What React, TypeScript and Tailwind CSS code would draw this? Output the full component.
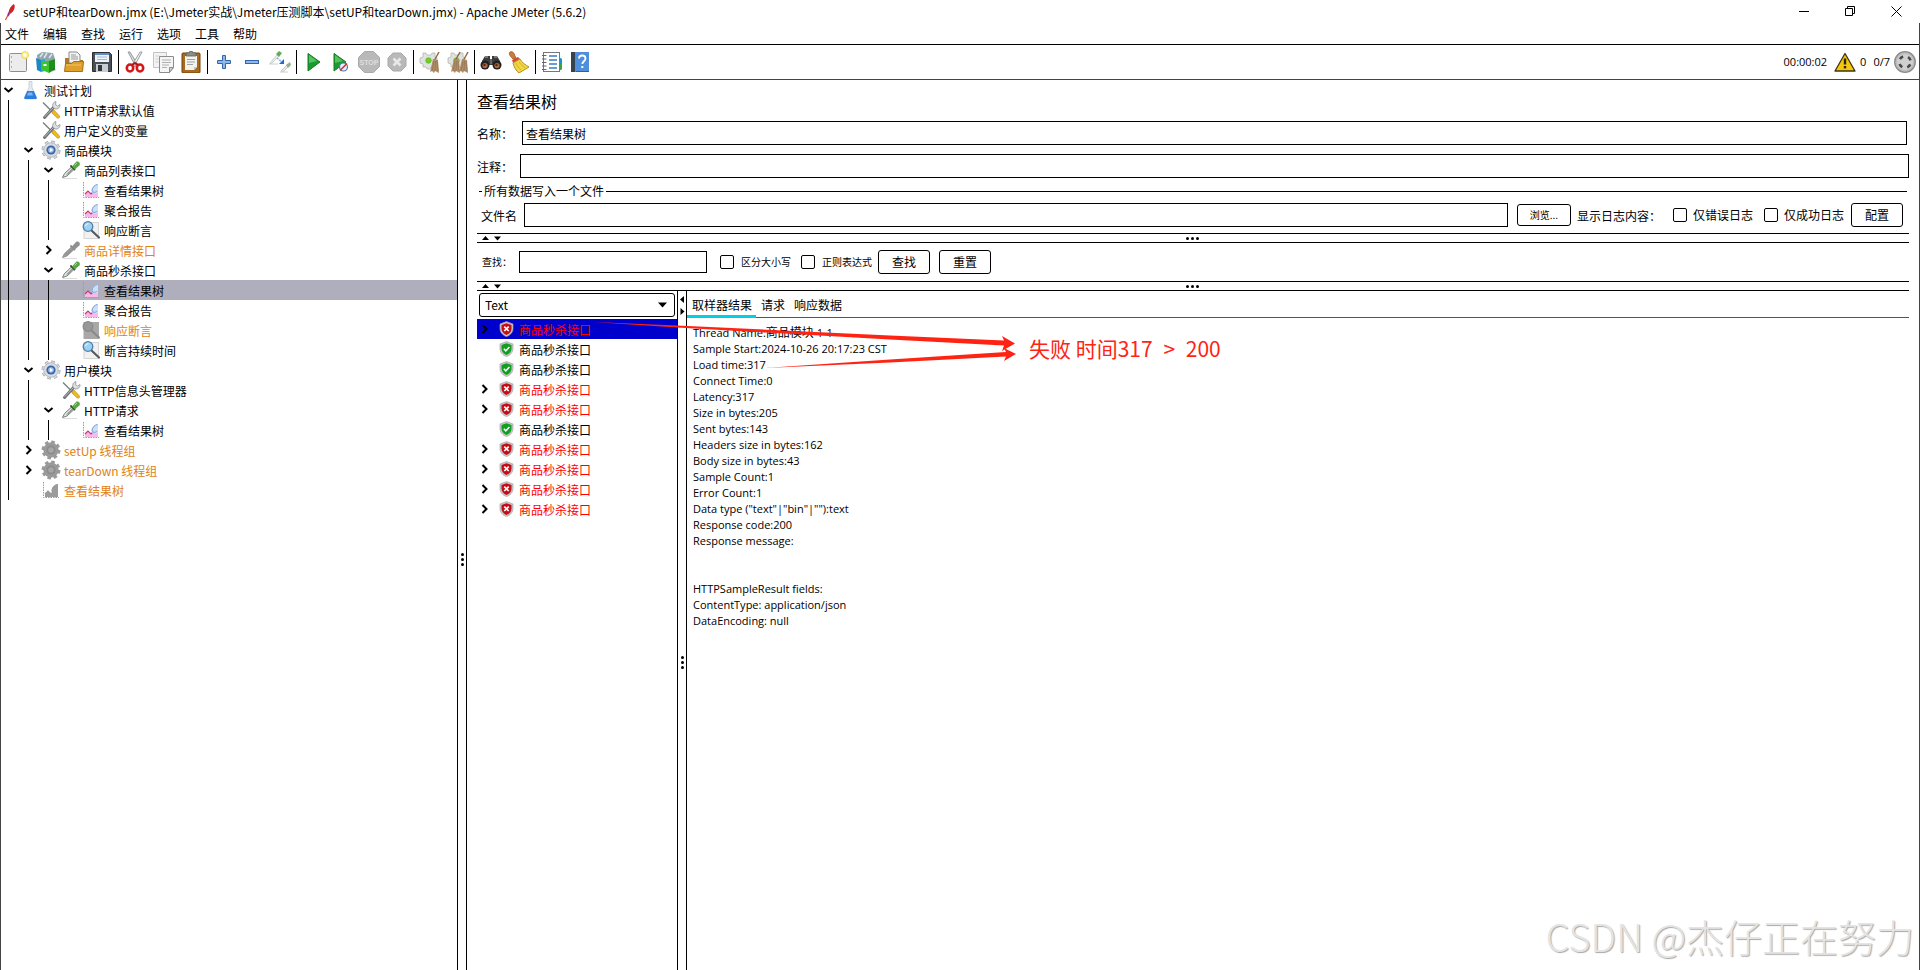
import { Fragment, ReactNode } from "react";

/* ---------- toolbar icons (22x22) ---------- */

const Icon = ({ children }: { children: ReactNode }) => (
    <svg width="22" height="22" viewBox="0 0 22 22" fill="none" aria-hidden="true">
        {children}
    </svg>
);

const NewIcon = () => (
    <Icon>
        <rect x="2.5" y="2.5" width="17" height="18" rx="1" fill="#ececec" stroke="#8e8e8e" />
        <path d="M4.5 5v2M4.5 10v2M4.5 15v2" stroke="#b0b0b0" />
        <circle cx="18" cy="4" r="3.5" fill="#fdf3a0" stroke="#f0d64a" />
        <circle cx="18" cy="4" r="1.5" fill="#fff" />
    </Icon>
);

const TemplatesIcon = () => (
    <Icon>
        <path d="M2 4l5-3 11 1 2 6v11H3z" fill="#8fa6ad" />
        <path d="M5 6l3-4M9 7l3-5M14 7l3-4" stroke="#dfe8ea" strokeWidth="1.5" />
        <path d="M1 7l5 2v12l-4-2z" fill="#1b87c4" />
        <path d="M6 9l4-1v12l-4 1z" fill="#2ba3df" />
        <path d="M7 10l7 0v12l-7-3z" fill="#3cc42d" />
        <path d="M14 10l6-2v10l-6 4z" fill="#1d8f1c" />
        <path d="M8.5 14h3" stroke="#fff" strokeWidth="2" />
        <path d="M19 17l2 2-5 2z" fill="#333" opacity=".4" />
    </Icon>
);

const OpenIcon = () => (
    <Icon>
        <path d="M2 7h5l1 2h12v11H2z" fill="#b5791a" />
        <path d="M6 1h8l3 3v8H6z" fill="#f4f4f4" stroke="#8a8a8a" />
        <path d="M8 4h5M8 6h7M8 8h7" stroke="#999" />
        <path d="M1.5 20.5l1-8h6l2-2h10l-1 10z" fill="#e0a02c" stroke="#a8721a" />
        <path d="M3 14h15" stroke="#f2c468" />
    </Icon>
);

const SaveIcon = () => (
    <Icon>
        <path d="M1.5 1.5h17l2 2v17h-19z" fill="#4a4f57" stroke="#2b2e33" />
        <rect x="4" y="2" width="14" height="9" fill="#eef3f9" />
        <path d="M4 2h14v2H4z" fill="#5b8ec9" />
        <path d="M6 6h10M6 8.5h10" stroke="#a9b8c8" />
        <rect x="5" y="13" width="12" height="8" fill="#c9ccd0" />
        <rect x="7" y="14" width="4" height="6" fill="#33363b" />
    </Icon>
);

const CutIcon = () => (
    <Icon>
        <path d="M4 1l2 0 8 13-2 2z" fill="#d5d8da" stroke="#85898c" strokeWidth=".8" />
        <path d="M18 1l-2 0-8 13 2 2z" fill="#eceeef" stroke="#85898c" strokeWidth=".8" />
        <ellipse cx="6" cy="17" rx="3.2" ry="3.5" stroke="#d11717" strokeWidth="2.6" />
        <ellipse cx="16" cy="17" rx="3.2" ry="3.5" stroke="#d11717" strokeWidth="2.6" />
        <path d="M8 14l3-2 3 2" stroke="#b80f0f" strokeWidth="2" />
    </Icon>
);

const CopyIcon = () => (
    <Icon>
        <path d="M1.5 1.5h13v15h-13z" fill="#f3f3f3" stroke="#c4c4c4" />
        <path d="M3.5 5h4M3.5 8h3M3.5 11h3" stroke="#cfcfcf" />
        <path d="M7.5 5.5h14v11l-4 5h-10z" fill="#f5f5f5" stroke="#8d8d8d" />
        <path d="M10 9h9M10 11.5h9M10 14h7M10 16.5h5" stroke="#b0b0b0" />
        <path d="M21.5 16.5h-4v5z" fill="#d2d2d2" stroke="#8d8d8d" />
    </Icon>
);

const PasteIcon = () => (
    <Icon>
        <rect x="2" y="2" width="18" height="20" rx="1" fill="#a96a1d" stroke="#6f430f" />
        <path d="M5 5h12v11l-3 3H5z" fill="#f2f2ee" />
        <path d="M7 8.5h8M7 11h8M7 13.5h6" stroke="#a2a2a2" />
        <path d="M17 16h-3v3z" fill="#c5c5c5" />
        <path d="M6 2h3l1-2h2l1 2h3v3H6z" fill="#8b8f86" stroke="#5b5e58" strokeWidth=".8" />
    </Icon>
);

const PlusIcon = () => (
    <Icon>
        <path d="M9.5 4.5h3v5h5v3h-5v5h-3v-5h-5v-3h5z" fill="#8fb8e6" stroke="#2f66b0" />
    </Icon>
);

const MinusIcon = () => (
    <Icon>
        <rect x="4.5" y="9.5" width="13" height="3" fill="#8fb8e6" stroke="#2f66b0" />
    </Icon>
);

const ToggleIcon = () => (
    <Icon>
        <path d="M1 12l7-8 2 1-8 8z" fill="#eef1ee" stroke="#b4bab5" strokeWidth=".7" />
        <path d="M7 3l3-3 3 2-3 4z" fill="#6ba85c" />
        <path d="M0 13h9" stroke="#d0d0d0" />
        <path d="M8 7l6 5" stroke="#7fb0e8" strokeWidth="1.5" strokeDasharray="2 1" />
        <path d="M15 8v5h-5z" fill="#2468c8" />
        <path d="M12 20l6-6 1 2-5 5z" fill="#e6e9e4" stroke="#b4bab5" strokeWidth=".7" />
        <path d="M17 14l4-3 1 3-3 3z" fill="#95b08c" />
        <path d="M11 21h8" stroke="#d0d0d0" />
    </Icon>
);

const StartIcon = () => (
    <Icon>
        <path d="M6 2.5L18 11 6 20z" fill="#1c9a2e" stroke="#157a22" strokeLinejoin="round" />
        <path d="M7 4l8 6-8 2z" fill="#56c25f" />
    </Icon>
);

const StartNoTimersIcon = () => (
    <Icon>
        <path d="M4 2.5L16 11 4 20z" fill="#1c9a2e" stroke="#157a22" strokeLinejoin="round" />
        <path d="M5 4l8 6-8 2z" fill="#56c25f" />
        <circle cx="13.5" cy="16" r="4" fill="#e6eef9" stroke="#4a78c0" strokeWidth="1.2" />
        <path d="M10 19.5l7-7" stroke="#d22b2b" strokeWidth="1.5" />
    </Icon>
);

const StopIcon = () => (
    <Icon>
        <path d="M6.5.5h9l6 6v9l-6 6h-9l-6-6v-9z" fill="#b9b9b9" stroke="#aaa" />
        <text x="11" y="14" textAnchor="middle" fontSize="7" fontWeight="700" fill="#dedede" fontFamily="Liberation Sans, sans-serif">
            STOP
        </text>
    </Icon>
);

const ShutdownIcon = () => (
    <Icon>
        <path d="M7 2h8l5 5v8l-5 5H7l-5-5V7z" fill="#b9b9b9" stroke="#a8a8a8" />
        <path d="M7.5 7.5l7 7M14.5 7.5l-7 7" stroke="#e8e8e8" strokeWidth="2.6" />
    </Icon>
);

const Broom = ({ x }: { x: number }) => (
    <g transform={`translate(${x} 0)`}>
        <path d="M9 1l-5 9" stroke="#8e6a45" strokeWidth="1.5" />
        <path d="M3 8l5 1 1 13-4-2-1 2-2-2-2 1z" fill="#b08d67" />
        <path d="M4 10l-2 10M5.5 10l-.5 10M7 10l1 10" stroke="#8d6d4b" strokeWidth=".6" />
    </g>
);

const ClearGear = () => (
    <>
        <path d="M4 2h3l1 2h4l1-2h3v4l2 1v4l-2 2v3h-4l-1 2H8l-1-2H4v-3l-3-1V7l3-1z" fill="#dfe2df" stroke="#b3b7b3" strokeWidth=".8" />
        <circle cx="9.5" cy="9.5" r="2.8" fill="#6fcf2a" stroke="#5aae28" strokeWidth=".6" />
    </>
);

const ClearIcon = () => (
    <Icon>
        <ClearGear />
        <Broom x={11} />
    </Icon>
);

const ClearAllIcon = () => (
    <Icon>
        <ClearGear />
        <Broom x={4} />
        <Broom x={12} />
    </Icon>
);

const SearchIcon = () => (
    <Icon>
        <path d="M2 10l3-5h5v3h2V5h5l3 5v4H2z" fill="#3c3c3c" />
        <path d="M5 6l3 0M14 6l3 0" stroke="#8b8b8b" strokeWidth="1.5" />
        <circle cx="5" cy="14" r="4.5" fill="#1f1f1f" />
        <circle cx="17" cy="14" r="4.5" fill="#1f1f1f" />
        <circle cx="5" cy="14.5" r="2.6" fill="#b4673c" />
        <circle cx="17" cy="14.5" r="2.6" fill="#b4673c" />
        <circle cx="4.5" cy="14" r="1.2" fill="#4b2b1c" />
        <circle cx="16.5" cy="14" r="1.2" fill="#4b2b1c" />
        <rect x="10" y="8" width="2" height="5" fill="#666" />
    </Icon>
);

const ResetIcon = () => (
    <Icon>
        <path d="M2 1c3-1 4 1 5 4l1 2-3 1C3 6 0 3 2 1z" fill="#d4793a" stroke="#95501f" strokeWidth=".8" />
        <path d="M4 9l6-3 2 2-7 4z" fill="#cf4c3b" />
        <path d="M5 12l7-4c2 4 6 6 9 8l-10 6C8 20 6 16 5 12z" fill="#f1d544" stroke="#b3921c" />
        <path d="M8 12c1 3 3 5 5 7M11 11c2 3 4 4 6 6" stroke="#c9a827" strokeWidth=".8" />
    </Icon>
);

const FunctionIcon = () => (
    <Icon>
        <path d="M18 6l3 2v10l-3 2z" fill="#1e8fd0" />
        <path d="M18 13h3v5l-3 2z" fill="#3aa63a" />
        <rect x="2.5" y="1.5" width="16" height="19" fill="#fff" stroke="#777" />
        <path d="M8 5h8M8 9h8M8 13h8M8 17h8" stroke="#3b7ac6" strokeWidth="1.3" />
        <path d="M1 4.5h4M1 8h4M1 11.5h4M1 15h4M1 18.5h4" stroke="#666" />
        <path d="M5 4.5h1M5 8h1M5 11.5h1M5 15h1M5 18.5h1" stroke="#bbb" />
    </Icon>
);

const HelpIcon = () => (
    <Icon>
        <rect x="2" y="1" width="18" height="20" fill="#4f8edb" />
        <rect x="2" y="1" width="4" height="20" fill="#37424f" />
        <path d="M7 20.5h13" stroke="#2b5fa6" />
        <path d="M10 7.5c0-4 6.5-4 6.5 0 0 2.5-3.2 3-3.2 5.5" stroke="#fff" strokeWidth="1.8" />
        <rect x="12.3" y="15" width="2" height="2" fill="#fff" />
    </Icon>
);

const WarningIcon = () => (
    <Icon>
        <path d="M11 2.5L21 20H1z" fill="#f5c60c" stroke="#3c3410" strokeWidth="1.3" strokeLinejoin="round" />
        <path d="M11 7.5v6" stroke="#2a2410" strokeWidth="2.4" />
        <rect x="9.8" y="15" width="2.4" height="2.4" fill="#2a2410" />
    </Icon>
);

const RunStateIcon = () => (
    <Icon>
        <circle cx="11" cy="11" r="10.3" fill="#bcbcbc" stroke="#8b8b8b" strokeWidth="1.3" />
        <circle cx="11" cy="11" r="8" fill="#d0d0d0" />
        <circle cx="11" cy="11" r="5.8" stroke="#4a4a4a" strokeWidth="2.6" strokeDasharray="4 5.11" strokeDashoffset="-2.5" />
    </Icon>
);

/* ---------- tree icons (20x20) ---------- */

type NodeKind = "plan" | "config" | "group" | "sampler" | "graph" | "assertion";

const NodeIcon = ({ kind, off }: { kind: NodeKind; off?: boolean }) => {
    const c = (color: string) => (off ? "#9b9b9b" : color);
    return (
        <svg width="20" height="20" viewBox="0 0 20 20" fill="none" className="shrink-0" aria-hidden="true">
            {kind === "plan" && (
                <>
                    <path d="M8 1.5h3v6l4.5 10c.3 1-.3 1.5-1 1.5h-10c-.8 0-1.3-.6-1-1.5l4.5-10z" fill="#e4ebf3" stroke="#b9c3cf" strokeWidth=".7" />
                    <path d="M6.2 11h6.6l3 6.8c.2.7-.3 1.2-1 1.2H4.2c-.7 0-1.2-.5-1-1.2z" fill="#2a7de0" />
                    <path d="M7 12.5h4l1 3H6z" fill="#7fb4f2" />
                </>
            )}
            {kind === "config" && (
                <>
                    <path d="M2 2.5l10 10" stroke="#7d8082" strokeWidth="1.4" />
                    <path d="M11 11l2-1 5.5 6c.6 1.4-.8 2.7-2.2 2L11 13z" fill="#f0ba1d" stroke="#b58410" strokeWidth=".6" />
                    <path d="M3.5 17.5L13 7" stroke="#6d7072" strokeWidth="3" strokeLinecap="round" />
                    <path d="M3.5 17L12.5 7.5" stroke="#b9bcbe" strokeWidth="1" />
                    <path d="M12 7.5c-1-3 .5-5.5 3-6l-.5 3 2 1.5 2.5-1.5c.5 2.5-2 5-5 4.5z" fill="#dcdfe0" stroke="#83878a" strokeWidth=".7" />
                </>
            )}
            {kind === "group" && (
                <>
                    <circle cx="10" cy="10" r="8.2" stroke={c("#9aa0a6")} strokeWidth="2.6" strokeDasharray="3.5 2.94" />
                    <circle cx="10" cy="10" r="8" stroke={c("#dfe3e6")} strokeWidth="1.6" strokeDasharray="2.7 3.583" strokeDashoffset="-.4" />
                    <circle cx="10" cy="10" r="7.3" fill={c("#d8dce0")} stroke={off ? "#8f8f8f" : "#9aa1a8"} strokeWidth=".6" />
                    <circle cx="10" cy="10" r="4.6" fill={off ? "#8b8b8b" : "#3b66a8"} />
                    <circle cx="10" cy="10" r="2.8" fill={off ? "#a6a6a6" : "#9cc0ec"} />
                    {!off && <path d="M9 8l3 2-3 2z" fill="#fff" />}
                </>
            )}
            {kind === "sampler" && (
                <>
                    <path d="M2 18.5h14" stroke="#dcdcdc" />
                    <path d="M1.5 17.5l2-4 7.5-7 2.5 2.5-7.5 7z" fill={off ? "#9b9b9b" : "#dde3de"} stroke={off ? "#8d8d8d" : "#6c736e"} strokeWidth=".9" />
                    <path d="M6 14.5l5.5-5.5" stroke={off ? "#8d8d8d" : "#59605b"} />
                    <path d="M10 6l3.5 3.5" stroke={off ? "#8d8d8d" : "#3f4b40"} strokeWidth="1.8" strokeLinecap="round" />
                    <path d="M11 6.5l4-4.5c1.5-1.5 5 .5 3.5 3.2L14 9.5z" fill={off ? "#909090" : "#5aa545"} />
                    {!off && <path d="M13.5 5.5l2.5-2.5" stroke="#a4d694" />}
                </>
            )}
            {kind === "graph" && (
                <>
                    <path d="M2.5 2v15.5H18" stroke="#9c9c9c" strokeDasharray="1.5 1" />
                    <path d="M4 17v-3l3-3 3 2.5L13 11l4 1v5z" fill={c("#f7b8ea")} />
                    <path d="M4 14l3-3 3 3 2-2" stroke={c("#c93a78")} strokeWidth="1.2" />
                    <path d="M10.5 11c0-4 3-6.5 6.5-7v8.5c-2 1.5-6 1.5-6.5-1.5z" fill={c("#cbdff8")} />
                    <path d="M16.5 4.5c-3 .5-5.5 3-5.5 6.5 1.5 2 4 1.5 5 0" stroke={c("#6f97d4")} strokeWidth=".9" />
                </>
            )}
            {kind === "assertion" && (
                <>
                    <rect x="3" y="2.5" width="14.5" height="16" fill={off ? "#a8a8a8" : "#f1f1f1"} stroke={off ? "#a8a8a8" : "#d6d6d6"} />
                    <path d="M10.5 10.5l7.5 7" stroke={off ? "#8a8a8a" : "#55595d"} strokeWidth="2.2" strokeLinecap="round" />
                    <circle cx="7" cy="6.5" r="4.8" fill={off ? "#989898" : "#9bd2f4"} stroke={off ? "#8a8a8a" : "#4f7ea6"} strokeWidth="1.3" />
                    {!off && <path d="M4.5 6c.3-1.5 1.5-2.3 3-2.2" stroke="#fff" />}
                </>
            )}
        </svg>
    );
};

const ShieldIcon = ({ ok }: { ok: boolean }) => (
    <svg width="15" height="16" viewBox="0 0 15 16" fill="none" className="shrink-0" aria-hidden="true">
        <path d="M7.5.6L14 3v4.5c0 4-3 6.8-6.5 8.1C4 14.3 1 11.5 1 7.5V3z" fill="#c9c9c9" stroke="#a2a2a2" strokeWidth=".7" />
        <path d="M7.5 2.2l5 1.8v3.7c0 3-2.3 5.2-5 6.3-2.7-1.1-5-3.3-5-6.3V4z" fill={ok ? "#10a020" : "#c40d16"} />
        {ok ? (
            <path d="M4.8 7.8l2 2 3.6-3.8" stroke="#fff" strokeWidth="1.5" />
        ) : (
            <path d="M5.3 5.6l4.4 4.4M9.7 5.6l-4.4 4.4" stroke="#fff" strokeWidth="1.7" />
        )}
    </svg>
);

const Chevron = ({ open }: { open: boolean }) => (
    <svg width="11" height="11" viewBox="0 0 11 11" fill="none" aria-hidden="true">
        <path d={open ? "M1.5 3l4 3.5 4-3.5" : "M3.5 1l4 4-4 4"} stroke="#000" strokeWidth="2" />
    </svg>
);

/* ---------- data ---------- */

const menus = ["文件", "编辑", "查找", "运行", "选项", "工具", "帮助"];

const toolGroups: { name: string; icon: ReactNode }[][] = [
    [
        { name: "新建", icon: <NewIcon /> },
        { name: "模板", icon: <TemplatesIcon /> },
        { name: "打开", icon: <OpenIcon /> },
        { name: "保存", icon: <SaveIcon /> },
    ],
    [
        { name: "剪切", icon: <CutIcon /> },
        { name: "复制", icon: <CopyIcon /> },
        { name: "粘贴", icon: <PasteIcon /> },
    ],
    [
        { name: "展开", icon: <PlusIcon /> },
        { name: "收起", icon: <MinusIcon /> },
        { name: "切换", icon: <ToggleIcon /> },
    ],
    [
        { name: "启动", icon: <StartIcon /> },
        { name: "不停顿启动", icon: <StartNoTimersIcon /> },
        { name: "停止", icon: <StopIcon /> },
        { name: "关闭", icon: <ShutdownIcon /> },
    ],
    [
        { name: "清除", icon: <ClearIcon /> },
        { name: "清除全部", icon: <ClearAllIcon /> },
    ],
    [
        { name: "搜索", icon: <SearchIcon /> },
        { name: "重置搜索", icon: <ResetIcon /> },
    ],
    [
        { name: "函数助手", icon: <FunctionIcon /> },
        { name: "帮助", icon: <HelpIcon /> },
    ],
];

interface TreeNode {
    depth: number;
    kind: NodeKind;
    label: string;
    open?: boolean;
    off?: boolean;
    selected?: boolean;
}

const tree: TreeNode[] = [
    { depth: 0, kind: "plan", label: "测试计划", open: true },
    { depth: 1, kind: "config", label: "HTTP请求默认值" },
    { depth: 1, kind: "config", label: "用户定义的变量" },
    { depth: 1, kind: "group", label: "商品模块", open: true },
    { depth: 2, kind: "sampler", label: "商品列表接口", open: true },
    { depth: 3, kind: "graph", label: "查看结果树" },
    { depth: 3, kind: "graph", label: "聚合报告" },
    { depth: 3, kind: "assertion", label: "响应断言" },
    { depth: 2, kind: "sampler", label: "商品详情接口", open: false, off: true },
    { depth: 2, kind: "sampler", label: "商品秒杀接口", open: true },
    { depth: 3, kind: "graph", label: "查看结果树", selected: true },
    { depth: 3, kind: "graph", label: "聚合报告" },
    { depth: 3, kind: "assertion", label: "响应断言", off: true },
    { depth: 3, kind: "assertion", label: "断言持续时间" },
    { depth: 1, kind: "group", label: "用户模块", open: true },
    { depth: 2, kind: "config", label: "HTTP信息头管理器" },
    { depth: 2, kind: "sampler", label: "HTTP请求", open: true },
    { depth: 3, kind: "graph", label: "查看结果树" },
    { depth: 1, kind: "group", label: "setUp 线程组", open: false, off: true },
    { depth: 1, kind: "group", label: "tearDown 线程组", open: false, off: true },
    { depth: 1, kind: "graph", label: "查看结果树", off: true },
];

const samples = [false, true, true, false, false, true, false, false, false, false];

const resultText = `Sample Start:2024-10-26 20:17:23 CST
Load time:317
Connect Time:0
Latency:317
Size in bytes:205
Sent bytes:143
Headers size in bytes:162
Body size in bytes:43
Sample Count:1
Error Count:1
Data type ("text"|"bin"|""):text
Response code:200
Response message:


HTTPSampleResult fields:
ContentType: application/json
DataEncoding: null`;

/* ---------- parts ---------- */

const TitleBar = () => (
    <header className="flex h-[23px] items-center pl-1">
        <svg width="12" height="18" viewBox="0 0 12 18" fill="none" aria-hidden="true">
            <path d="M10 1c1.5 2 .5 5-1 7.5L6 11 4.5 9.5C5 6 7 2.5 10 1z" fill="#d22128" />
            <path d="M6 11L4.5 9 3 12.5l1.5 1z" fill="#8a2a8c" />
            <path d="M4 12l-2.5 5" stroke="#d9531e" strokeWidth="1.3" />
        </svg>
        <h1 className="ml-[7px] flex-1 whitespace-nowrap">
            {"setUP和tearDown.jmx (E:\\Jmeter实战\\Jmeter压测脚本\\setUP和tearDown.jmx) - Apache JMeter (5.6.2)"}
        </h1>
        <div className="flex h-full pr-px">
            <button aria-label="最小化" className="flex w-[46px] items-center justify-center">
                <svg width="11" height="11" viewBox="0 0 11 11" stroke="#000"><path d="M0 5.5h10" /></svg>
            </button>
            <button aria-label="还原" className="flex w-[46px] items-center justify-center">
                <svg width="11" height="11" viewBox="0 0 11 11" fill="none" stroke="#000">
                    <path d="M.5 2.5h7v7h-7zM2.5 2.5v-2h7v7h-2" />
                </svg>
            </button>
            <button aria-label="关闭" className="flex w-[46px] items-center justify-center">
                <svg width="11" height="11" viewBox="0 0 11 11" stroke="#000"><path d="M.5.5l10 10M10.5.5l-10 10" /></svg>
            </button>
        </div>
    </header>
);

const Toolbar = () => (
    <div className="flex h-[35px] items-center border-b border-[#444] px-[3px]">
        {toolGroups.map((group, i) => (
            <Fragment key={i}>
                {i > 0 && <span className="mx-[2px] h-6 w-px bg-black" />}
                {group.map((tool) => (
                    <button key={tool.name} aria-label={tool.name} className="flex w-7 justify-center">
                        {tool.icon}
                    </button>
                ))}
            </Fragment>
        ))}
        <div className="ml-auto flex items-center font-['Open_Sans',sans-serif] text-[11px]">
            <span className="mr-[7px]">00:00:02</span>
            <WarningIcon />
            <span className="ml-1">0</span>
            <span className="mr-1 ml-[7px]">0/7</span>
            <RunStateIcon />
        </div>
    </div>
);

const TreeRow = ({ node }: { node: TreeNode }) => (
    <li className={node.selected ? "flex h-5 items-center bg-[#aeaebc]" : "flex h-5 items-center"}>
        {Array.from({ length: node.depth }, (_, i) => (
            <span key={i} className="flex h-5 w-5 shrink-0 pl-[7px]">
                <span className="w-px bg-black" />
            </span>
        ))}
        <span className="mr-[5px] flex w-[15px] shrink-0 justify-center">
            {node.open !== undefined && <Chevron open={node.open} />}
        </span>
        <NodeIcon kind={node.kind} off={node.off} />
        <span className={node.off ? "pt-[2px] pl-[3px] whitespace-nowrap text-[#e08214]" : "pt-[2px] pl-[3px] whitespace-nowrap"}>
            {node.label}
        </span>
    </li>
);

// Horizontal split handle: two collapse arrows on the left, grip in the middle
const SplitBar = () => (
    <div className="flex h-[10px] items-center border-y border-black">
        <svg width="22" height="8" viewBox="0 0 22 8" className="ml-1" aria-hidden="true">
            <path d="M1 6l3.5-4L8 6zM13 2.5h7l-3.5 4z" />
        </svg>
        <span className="mr-7 flex flex-1 justify-center gap-[2px]">
            <i className="h-[3px] w-[3px] rounded-full bg-black" />
            <i className="h-[3px] w-[3px] rounded-full bg-black" />
            <i className="h-[3px] w-[3px] rounded-full bg-black" />
        </span>
    </div>
);

const VerticalGrip = () => (
    <span className="flex flex-col items-center gap-[2px]">
        <i className="h-[3px] w-[3px] rounded-full bg-black" />
        <i className="h-[3px] w-[3px] rounded-full bg-black" />
        <i className="h-[3px] w-[3px] rounded-full bg-black" />
    </span>
);

const CheckBox = ({ id }: { id: string }) => (
    <input id={id} type="checkbox" className="h-[14px] w-[14px] shrink-0 appearance-none rounded-[2px] border border-black bg-white" />
);

const buttonClass = "h-6 w-[52px] shrink-0 rounded-[3px] border border-black bg-white";

const Settings = () => (
    <>
        <h2 className="mt-[10px] mb-[9px] text-base leading-[22px]">查看结果树</h2>
        <div className="mr-[2px] flex items-center">
            <label htmlFor="name" className="w-[45px] shrink-0 pt-[2px]">名称：</label>
            <input id="name" defaultValue="查看结果树" className="h-6 min-w-0 flex-1 border border-black px-[3px]" />
        </div>
        <div className="mt-[9px] flex items-center">
            <label htmlFor="comment" className="w-[43px] shrink-0 pt-[2px]">注释：</label>
            <input id="comment" className="h-6 min-w-0 flex-1 border border-black px-[3px]" />
        </div>
        <fieldset className="mx-[2px] mt-[3px] mb-[6px] min-w-0 border-t border-black">
            <legend className="ml-[3px] px-[2px] leading-5">所有数据写入一个文件</legend>
            <div className="flex items-center pt-[2px] pr-1 pl-[2px] whitespace-nowrap">
                <label htmlFor="file" className="pt-[2px]">文件名</label>
                <input id="file" className="ml-[7px] h-6 min-w-0 flex-1 border border-black px-[3px]" />
                <button className="ml-[9px] h-[22px] w-[54px] rounded-[3px] border border-black text-[10px]">浏览...</button>
                <span className="ml-[6px] pt-[2px]">显示日志内容：</span>
                <span className="ml-3 flex items-center gap-[6px]">
                    <CheckBox id="errors" />
                    <label htmlFor="errors">仅错误日志</label>
                </span>
                <span className="mr-[7px] ml-[11px] flex items-center gap-[6px]">
                    <CheckBox id="successes" />
                    <label htmlFor="successes">仅成功日志</label>
                </span>
                <button className={buttonClass}>配置</button>
            </div>
        </fieldset>
    </>
);

const SearchRow = () => (
    <div className="flex h-[38px] items-center pl-[5px] text-[10px] whitespace-nowrap">
        <label htmlFor="query">查找：</label>
        <input id="query" className="ml-[7px] h-[22px] w-[188px] border border-black px-[3px] text-xs" />
        <span className="ml-[13px] flex items-center gap-[7px]">
            <CheckBox id="case" />
            <label htmlFor="case">区分大小写</label>
        </span>
        <span className="ml-[10px] flex items-center gap-[7px]">
            <CheckBox id="regexp" />
            <label htmlFor="regexp">正则表达式</label>
        </span>
        <span className="ml-[6px] flex gap-[9px] text-xs">
            <button className={buttonClass}>查找</button>
            <button className={buttonClass}>重置</button>
        </span>
    </div>
);

const SampleList = () => (
    <div className="w-[201px] shrink-0 border-r border-black">
        <div className="relative m-[2px]">
            <select aria-label="渲染方式" className="block h-6 w-full appearance-none rounded-[3px] border border-black bg-white px-[5px]">
                <option>Text</option>
            </select>
            <svg width="9" height="6" viewBox="0 0 9 6" className="pointer-events-none absolute top-[9px] right-2" aria-hidden="true">
                <path d="M0 .5h9L4.5 5.5z" />
            </svg>
        </div>
        <ul>
            {samples.map((ok, i) => (
                <li key={i} className={i === 0 ? "flex h-5 items-center bg-[#0000cc]" : "flex h-5 items-center"}>
                    <span className="mr-2 flex w-[14px] justify-center">{!ok && <Chevron open={false} />}</span>
                    <ShieldIcon ok={ok} />
                    <span className={ok ? "pt-[2px] pl-[5px]" : "pt-[2px] pl-[5px] text-[#ff0000]"}>商品秒杀接口</span>
                </li>
            ))}
        </ul>
    </div>
);

const ResultPane = () => (
    <div className="min-w-0 flex-1 border-l border-black">
        <div className="flex h-[27px] border-b border-[#555]">
            <button className="-mb-px border-b-[3px] border-[#00cfe4] pt-[3px] pr-1 pl-[5px]">取样器结果</button>
            <button className="pt-px pr-1 pl-[5px]">请求</button>
            <button className="pt-px pr-1 pl-[5px]">响应数据</button>
        </div>
        <pre className="px-[6px] pt-[7px] font-['Open_Sans','Noto_Sans_CJK_SC',sans-serif] text-[11px] leading-4">
            Thread Name:<span className="text-xs leading-none">商品模块</span>{" 1-1\n"}
            {resultText}
        </pre>
    </div>
);

// Red arrows and remark that lie over the results
const Remark = () => (
    <>
        <svg width="430" height="56" viewBox="0 0 430 56" className="pointer-events-none absolute top-[29px] left-[114px]" fill="#ff2314" aria-hidden="true">
            <path d="M2 2L86 5.5 299 15.5 413 20.5 411 16 424 23.5 411 31 413 25.5 299 19.5 86 7.5z" />
            <path d="M174 48L299 39.5 415 32 413 28 425 34 413 41 415 36.5 299 42.5z" />
        </svg>
        <p className="absolute top-[43px] left-[552px] text-[21px] leading-7 whitespace-nowrap text-[#ff2314]">
            失败 时间317 <span className="mx-[6px]">&gt;</span> 200
        </p>
    </>
);

export default function App() {
    return (
        <div className="relative flex min-h-screen flex-col overflow-hidden bg-white font-['Noto_Sans_CJK_SC',sans-serif] text-xs text-black">
            <TitleBar />
            <div className="flex flex-1 flex-col border-x border-[#444]">
                <nav className="flex h-[22px] items-center gap-[14px] border-b border-black pl-1">
                    {menus.map((menu) => (
                        <button key={menu}>{menu}</button>
                    ))}
                </nav>
                <Toolbar />
                <div className="flex flex-1">
                    <aside className="w-[457px] shrink-0 border-r border-black">
                        <ul>
                            {tree.map((node, i) => (
                                <TreeRow key={i} node={node} />
                            ))}
                        </ul>
                    </aside>
                    <div className="flex w-2 shrink-0 flex-col items-center justify-center pt-[68px]">
                        <VerticalGrip />
                    </div>
                    <main className="flex min-w-0 flex-1 flex-col border-l border-black px-[10px]">
                        <Settings />
                        <SplitBar />
                        <SearchRow />
                        <SplitBar />
                        <div className="relative flex flex-1">
                            <SampleList />
                            <div className="flex w-2 shrink-0 flex-col items-center">
                                <svg width="8" height="24" viewBox="0 0 8 24" className="mt-[3px]" aria-hidden="true">
                                    <path d="M6 2v7L2 5.5zM2.5 14v7l4-3.5z" />
                                </svg>
                                <div className="flex flex-1 flex-col justify-center pt-[37px]">
                                    <VerticalGrip />
                                </div>
                            </div>
                            <ResultPane />
                            <Remark />
                        </div>
                    </main>
                </div>
            </div>
            <p className="pointer-events-none absolute right-[6px] bottom-3 text-[38px] leading-[44px] font-light whitespace-nowrap text-[#e4e4e4] [text-shadow:1px_1px_1px_#a8a8a8]">
                CSDN @杰仔正在努力
            </p>
        </div>
    );
}
